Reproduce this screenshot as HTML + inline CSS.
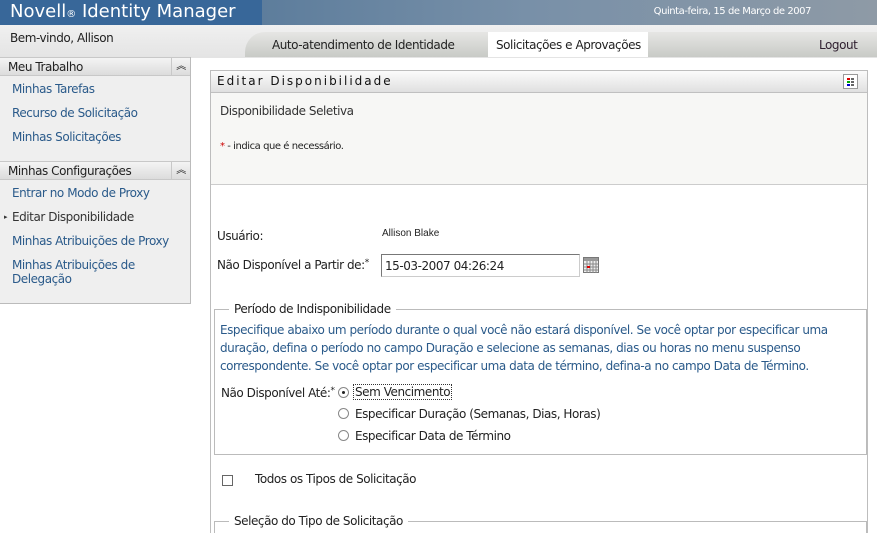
<!DOCTYPE html>
<html style="overflow:hidden"><head><meta charset="utf-8"><style>
*{margin:0;padding:0;box-sizing:border-box}
body{width:877px;height:533px;overflow:hidden;background:#fff;font-family:"DejaVu Sans","Liberation Sans",sans-serif;font-size:11px;color:#222;position:relative;letter-spacing:-0.45px}
.a{position:absolute}
#hdr{left:0;top:0;width:877px;height:25px;background:linear-gradient(90deg,#386799 0,#386799 262px,#5d7d9c 262px,#7890a8 60%,#8e9aa6 100%)}
#hdr .t{left:10px;top:1px;color:#fff;font-size:18px;letter-spacing:0}
#hdr .d{right:66px;top:6px;color:#fff;font-size:10px}
#nav{left:0;top:25px;width:877px;height:33px;background:linear-gradient(#f0f0f0,#e4e4e4)}
#tabs{left:245px;top:32px;width:632px;height:25px;background:linear-gradient(#e6e6e4,#c8cac6);border-top-left-radius:20px}
.tab{top:38px;font-size:12px;color:#222}
#side{left:0;top:57px;width:191px;height:247px;background:#efefef;border-right:1px solid #bbb;border-bottom:1px solid #bbb}
.sh{position:absolute;left:0;width:190px;height:19px;background:linear-gradient(#f4f4f4,#dcdcdc);border-top:1px solid #c8c8c8;border-bottom:1px solid #c8c8c8;font-size:12px;padding:2px 8px;color:#222}
.sh i{position:absolute;right:0;top:0;width:19px;height:17px;border-left:1px solid #c8c8c8;font-style:normal;font-size:10px;text-align:center;line-height:17px}
.lk{position:absolute;left:12px;font-size:12px;color:#2a5a8a}
#panel{left:210px;top:70px;width:658px;height:470px;border:1px solid #bdbdbd}
#ptitle{left:0;top:0;width:656px;height:22px;background:linear-gradient(#fbfbfb,#e0e0e0);border-bottom:1px solid #c0c0c0;font-size:12px;letter-spacing:2px;padding:3px 6px;color:#111}
#pbody{left:0;top:22px;width:656px;height:92px;background:#f7f7f5;border-bottom:1px solid #ccc}
fieldset{position:absolute;border:1px solid #bbb}
</style></head><body>
<div id="hdr" class="a"><div class="a t">Novell<span style="font-size:10px">®</span> Identity Manager</div><div class="a d">Quinta-feira, 15 de Março de 2007</div></div>
<div id="nav" class="a"><div class="a" style="left:10px;top:6px;font-size:12px">Bem-vindo, Allison</div></div>
<div id="tabs" class="a"></div>
<div class="a" style="left:488px;top:32px;width:160px;height:25px;background:#fff"></div>
<div class="a tab" style="left:272px">Auto-atendimento de Identidade</div>
<div class="a tab" style="left:496px">Solicitações e Aprovações</div>
<div class="a tab" style="left:819px;color:#302030">Logout</div>
<div id="side" class="a">
<div class="sh" style="top:0">Meu Trabalho<i>︽</i></div>
<div class="lk" style="top:25px">Minhas Tarefas</div>
<div class="lk" style="top:49px">Recurso de Solicitação</div>
<div class="lk" style="top:73px">Minhas Solicitações</div>
<div class="sh" style="top:104px">Minhas Configurações<i>︽</i></div>
<div class="lk" style="top:129px">Entrar no Modo de Proxy</div>
<div class="lk" style="top:153px;color:#333"><span style="position:absolute;left:-8px;font-size:7px;top:3px">▸</span>Editar Disponibilidade</div>
<div class="lk" style="top:177px">Minhas Atribuições de Proxy</div>
<div class="lk" style="top:201px;line-height:14px">Minhas Atribuições de<br>Delegação</div>
</div>
<div id="panel" class="a">
<div id="ptitle" class="a">Editar Disponibilidade
<div class="a" style="right:9px;top:3px;width:15px;height:15px;border:1px solid #999;background:#fff"><svg width="13" height="13"><rect x="3" y="3" width="3" height="2" fill="#d00"/><rect x="3" y="6" width="3" height="2" fill="#0a0"/><rect x="3" y="9" width="3" height="2" fill="#00c"/><rect x="7" y="3" width="3" height="2" fill="#666"/><rect x="7" y="6" width="3" height="2" fill="#666"/><rect x="7" y="9" width="3" height="2" fill="#666"/></svg></div></div>
<div id="pbody" class="a">
<div class="a" style="left:9px;top:11px;font-size:12px;color:#333">Disponibilidade Seletiva</div>
<div class="a" style="left:9px;top:48px;font-size:10px"><span style="color:#c00">*</span> - indica que é necessário.</div>
</div>
<div class="a" style="left:6px;top:158px;font-size:12px">Usuário:</div>
<div class="a" style="left:171px;top:157px;font-size:10px;font-family:'Liberation Sans',sans-serif;letter-spacing:0">Allison Blake</div>
<div class="a" style="left:6px;top:187px;font-size:12px">Não Disponível a Partir de:<span style="font-size:9px;vertical-align:top">*</span></div>
<div class="a" style="left:170px;top:183px;width:199px;height:23px;border:1px solid #777;border-right-color:#ccc;border-bottom-color:#ccc;background:#fff;font-size:12px;padding:4px 3px">15-03-2007 04:26:24</div>
<svg class="a" style="left:372px;top:186px" width="16" height="16"><rect x="0.5" y="0.5" width="15" height="15" fill="#eee" stroke="#777"/><rect x="1" y="1" width="14" height="3" fill="#999"/><path d="M1 7H15M1 10H15M1 13H15M4 4V16M7 4V16M10 4V16M13 4V16" stroke="#888" stroke-width="1"/><rect x="4" y="9" width="3" height="2" fill="#d00"/></svg>
<fieldset style="left:3px;top:231px;width:653px;height:153px"><legend style="margin-left:14px;padding:0 5px;font-size:12px">Período de Indisponibilidade</legend></fieldset>
<div class="a" style="left:9px;top:250px;width:648px;font-size:12px;line-height:18px;color:#2a5a8a">Especifique abaixo um período durante o qual você não estará disponível. Se você optar por especificar uma duração, defina o período no campo Duração e selecione as semanas, dias ou horas no menu suspenso correspondente. Se você optar por especificar uma data de término, defina-a no campo Data de Término.</div>
<div class="a" style="left:10px;top:315px;font-size:12px">Não Disponível Até:<span style="font-size:9px;vertical-align:top">*</span></div>
<div class="a" style="left:127px;top:316px;width:11px;height:11px;border:1px solid #888;border-radius:50%;background:#fff"><div style="margin:3px;width:3px;height:3px;background:#222;border-radius:50%"></div></div>
<div class="a" style="left:142px;top:313px;font-size:12px;border:1px dotted #333;padding:0 1px">Sem Vencimento</div>
<div class="a" style="left:127px;top:337px;width:11px;height:11px;border:1px solid #888;border-radius:50%;background:#fff"></div>
<div class="a" style="left:144px;top:336px;font-size:12px">Especificar Duração (Semanas, Dias, Horas)</div>
<div class="a" style="left:127px;top:359px;width:11px;height:11px;border:1px solid #888;border-radius:50%;background:#fff"></div>
<div class="a" style="left:144px;top:358px;font-size:12px">Especificar Data de Término</div>
<div class="a" style="left:11px;top:404px;width:11px;height:11px;border:1px solid #666;background:#fff"></div>
<div class="a" style="left:44px;top:401px;font-size:12px">Todos os Tipos de Solicitação</div>
<fieldset style="left:3px;top:443px;width:653px;height:40px"><legend style="margin-left:14px;padding:0 5px;font-size:12px">Seleção do Tipo de Solicitação</legend></fieldset>
</div>
</body></html>
